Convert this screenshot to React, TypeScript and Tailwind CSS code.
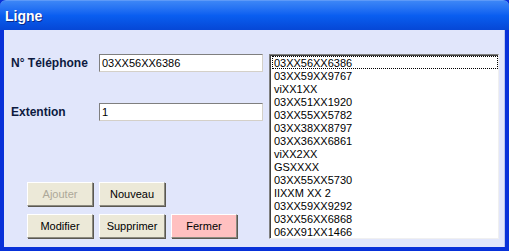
import React from 'react';

const numbers = [
  '03XX56XX6386',
  '03XX59XX9767',
  'viXX1XX',
  '03XX51XX1920',
  '03XX55XX5782',
  '03XX38XX8797',
  '03XX36XX6861',
  'viXX2XX',
  'GSXXXX',
  '03XX55XX5730',
  'IIXXM XX 2',
  '03XX59XX9292',
  '03XX56XX6868',
  '06XX91XX1466',
];

const XpButton = ({ label, disabled, danger }: { label: string; disabled?: boolean; danger?: boolean }) => (
  <button
    disabled={disabled}
    className={`w-[66px] h-[24px] text-[11px] border border-t-white border-l-white border-r-[#8c8a80] border-b-[#8c8a80] shadow-[1px_1px_0_#5a5850] ${
      danger ? 'bg-[#ffc0c0]' : 'bg-[#ece9d8]'
    } ${disabled ? 'text-[#aca899]' : 'text-black'}`}
  >
    {label}
  </button>
);

export default function App() {
  return (
    <div
      className="w-[509px] h-[251px] flex flex-col bg-[#0831d9] overflow-hidden"
      style={{ fontFamily: '"Liberation Sans", Arial, sans-serif' }}
    >
      {/* title bar */}
      <div className="h-[30px] shrink-0 flex items-center pl-[5px] pt-[2px] rounded-t-[6px] bg-gradient-to-b from-[#3c86f6] via-[#0a5ef0] to-[#0647d6] border-t border-[#5d9af8]">
        <span className="text-white font-bold text-[14px] [text-shadow:1px_1px_0_#0a2a8a]">Ligne</span>
      </div>

      {/* body */}
      <div className="flex-1 mx-[4px] mb-[4px] bg-[#e1e6fb] flex pt-[24px] pl-[7px] pr-[5px] pb-[8px] border-r border-r-[#b8c4ee]">
        <div className="w-[256px] flex flex-col">
          <div className="flex items-center h-[18px]">
            <span className="w-[88px] text-[12px] font-bold text-[#0d1a40]">N° Téléphone</span>
            <div className="w-[164px] h-[18px] bg-white border border-t-[#7f7f7f] border-l-[#7f7f7f] border-r-[#d4d0c8] border-b-[#d4d0c8] text-[11px] leading-[16px] pl-[2px]">
              03XX56XX6386
            </div>
          </div>
          <div className="flex items-center h-[18px] mt-[31px]">
            <span className="w-[88px] text-[12px] font-bold text-[#0d1a40]">Extention</span>
            <div className="w-[164px] h-[18px] bg-white border border-t-[#7f7f7f] border-l-[#7f7f7f] border-r-[#d4d0c8] border-b-[#d4d0c8] text-[11px] leading-[16px] pl-[2px]">
              1
            </div>
          </div>
          <div className="flex flex-col gap-[8px] mt-[61px] pl-[16px]">
            <div className="flex gap-[6px]">
              <XpButton label="Ajouter" disabled />
              <XpButton label="Nouveau" />
            </div>
            <div className="flex gap-[6px]">
              <XpButton label="Modifier" />
              <XpButton label="Supprimer" />
              <XpButton label="Fermer" danger />
            </div>
          </div>
        </div>

        {/* list */}
        <div className="ml-[4px] w-[232px] h-[185px] bg-white border border-t-[#808080] border-l-[#808080] border-r-[#f0f0f0] border-b-[#f0f0f0] shadow-[inset_1px_1px_0_#404040] pl-[2px] pt-[1px] overflow-hidden">
          {numbers.map((n, i) => (
            <div
              key={i}
              className={`h-[13px] leading-[12px] text-[11px] text-black pl-[1px] ${
                i === 0 ? 'border border-dotted border-black' : 'border border-transparent'
              }`}
            >
              {n}
            </div>
          ))}
        </div>
      </div>
    </div>
  );
}
